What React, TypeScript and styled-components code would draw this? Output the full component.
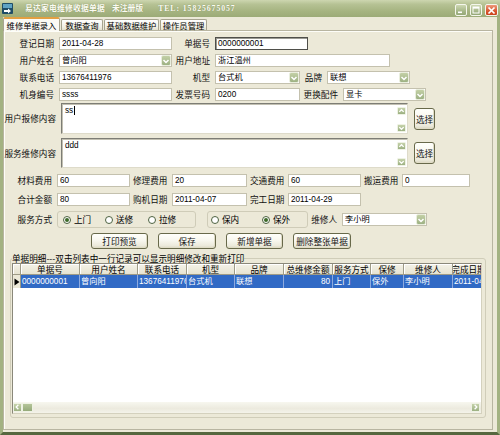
import React from "react";
import styled, { createGlobalStyle } from "styled-components";

const CJK = `"Noto Sans CJK SC", "Noto Sans", sans-serif`;
const UI = `"Liberation Sans", "Noto Sans CJK SC", sans-serif`;

const GlobalStyle = createGlobalStyle`
  html, body { margin: 0; padding: 0; background: #ece9d8; }
  body { font-family: ${UI}; font-size: 8.4px; color: #000; }
  * { box-sizing: border-box; }
`;

const Window = styled.div`
  width: 500px;
  height: 435px;
  display: flex;
  flex-direction: column;
  background: #ece9d8;
  overflow: hidden;
`;

const TitleBar = styled.div`
  height: 17px;
  flex: none;
  display: flex;
  align-items: center;
  padding: 0 2px;
  background: linear-gradient(#cdd6b0 0%, #b6c294 25%, #a6b481 65%, #9cab77 100%);
`;

const TitleText = styled.span<{ $ml: number; $ls?: number }>`
  margin-left: ${(p) => p.$ml}px;
  font-family: "Liberation Serif", "Noto Sans CJK SC", serif;
  font-weight: bold;
  font-size: 7.8px;
  line-height: 10px;
  letter-spacing: ${(p) => p.$ls ?? 0}px;
  color: #fbfbf2;
  text-shadow: 0 0 1px #7d8a5a;
  white-space: nowrap;
`;

const WinBtns = styled.div`
  margin-left: auto;
  display: flex;
  gap: 3px;
  padding-top: 3px;
`;

const WinBtn = styled.span<{ $close?: boolean }>`
  width: ${(p) => (p.$close ? 13 : 12)}px;
  height: 12px;
  border: 1px solid #f4f6ec;
  border-radius: 2px;
  background: ${(p) =>
    p.$close
      ? "linear-gradient(#ee9a7c, #d9552f 60%, #c9431f)"
      : "linear-gradient(#cdd8b2, #a6b788 60%, #95a877)"};
  display: flex;
  align-items: center;
  justify-content: center;
`;

const Body = styled.div`
  flex: 1;
  min-height: 0;
  display: flex;
  flex-direction: column;
  border-left: 3px solid #a3b282;
  border-right: 3px solid #a3b282;
  border-bottom: 3px solid #56673f;
`;

const TabStrip = styled.div`
  height: 13px;
  flex: none;
  display: flex;
  align-items: flex-end;
  gap: 1px;
  position: relative;
  z-index: 1;
`;

const Tab = styled.div<{ $w: number; $active?: boolean }>`
  width: ${(p) => p.$w}px;
  height: ${(p) => (p.$active ? 14 : 11)}px;
  margin-bottom: ${(p) => (p.$active ? -1 : 0)}px;
  border: 1px solid #a7a48f;
  border-bottom: none;
  border-top: ${(p) => (p.$active ? "2px solid #e3a042" : "1px solid #a7a48f")};
  border-radius: 2px 2px 0 0;
  background: ${(p) => (p.$active ? "#fbfaf4" : "linear-gradient(#ffffff, #f1efe4 70%, #e4e1cf)")};
  font-family: ${CJK};
  font-size: 8.3px;
  line-height: 10px;
  display: flex;
  align-items: center;
  justify-content: center;
  white-space: nowrap;
`;

const Panel = styled.div`
  flex: 1;
  min-height: 0;
  margin: 0 4px 2px 0;
  border: 1px solid #b8b5a1;
  box-shadow: inset 1px 1px 0 #fdfdf8;
  background: #ece9d8;
  display: flex;
  flex-direction: column;
`;

const Row = styled.div<{ $mt: number; $h?: number; $pl?: number; $gap?: number }>`
  display: flex;
  align-items: center;
  gap: ${(p) => p.$gap ?? 3}px;
  margin-top: ${(p) => p.$mt}px;
  height: ${(p) => p.$h ?? 13}px;
  padding-left: ${(p) => p.$pl ?? 0}px;
  flex: none;
`;

const Label = styled.span<{ $w: number }>`
  width: ${(p) => p.$w}px;
  flex: none;
  padding-right: 2px;
  text-align: right;
  white-space: nowrap;
  font-family: ${CJK};
  font-size: 8.6px;
  line-height: 13px;
  color: #111;
`;

const Input = styled.div<{ $w: number; $focus?: boolean }>`
  width: ${(p) => p.$w}px;
  height: 13px;
  flex: none;
  background: #fff;
  border: 1px solid ${(p) => (p.$focus ? "#4f4f4a" : "#c4c1ae")};
  box-shadow: ${(p) => (p.$focus ? "inset 1px 1px 0 #9a9a92" : "none")};
  display: flex;
  align-items: center;
  padding-left: 2px;
  font-size: 8.2px;
  line-height: 11px;
  white-space: nowrap;
  overflow: hidden;
`;

const InputText = styled.span`
  line-height: 11px;
  height: 11px;
  display: block;
`;

const DropBtn = styled.span`
  margin-left: auto;
  width: 10px;
  height: 11px;
  flex: none;
  border: 1px solid #e9eedd;
  border-radius: 2px;
  background: linear-gradient(#c3d0a6, #9db183);
  display: flex;
  align-items: center;
  justify-content: center;
`;

const Memo = styled.div<{ $w: number }>`
  width: ${(p) => p.$w}px;
  height: 100%;
  flex: none;
  display: flex;
  background: #fff;
  border-top: 1px solid #7d7d75;
  border-left: 1px solid #7d7d75;
  border-right: 1px solid #dedbca;
  border-bottom: 1px solid #dedbca;
  box-shadow: inset 1px 1px 0 #c2c0b2;
`;

const MemoText = styled.div`
  flex: 1;
  padding: 2px 3px;
  font-size: 8.2px;
  line-height: 10px;
  display: flex;
  align-items: flex-start;
`;

const Caret = styled.span`
  width: 1px;
  height: 9px;
  background: #000;
  margin-left: 1px;
`;

const VScroll = styled.div`
  width: 10px;
  flex: none;
  display: flex;
  flex-direction: column;
  justify-content: space-between;
  padding: 3px 1px 1px 0;
`;

const ScrollArrow = styled.span`
  width: 9px;
  height: 8px;
  border-radius: 1px;
  background: linear-gradient(#c5d2aa, #9cb082);
  border: 1px solid #eef2e4;
  display: flex;
  align-items: center;
  justify-content: center;
`;

const Btn = styled.button<{ $w: number; $h?: number }>`
  width: ${(p) => p.$w}px;
  height: ${(p) => p.$h ?? 16}px;
  flex: none;
  padding: 0;
  margin: 0;
  font-family: ${CJK};
  font-size: 8.6px;
  line-height: 10px;
  color: #111;
  border: 1px solid #68694a;
  border-radius: 3px;
  background: linear-gradient(#fffffb 0%, #f8f7ef 45%, #ebe9da 85%, #d8d5bf 100%);
  box-shadow: inset -1px -1px 0 #e0dcc6;
  white-space: nowrap;
`;

const SelectBtn = styled(Btn)`
  margin-left: 3px;
`;

const RadioGroup = styled.div<{ $w: number; $pl: number; $ml?: number }>`
  width: ${(p) => p.$w}px;
  height: 17px;
  flex: none;
  margin-left: ${(p) => p.$ml ?? 0}px;
  padding-left: ${(p) => p.$pl}px;
  border: 1px solid #cfccb8;
  border-radius: 3px;
  display: flex;
  align-items: center;
`;

const RadioItem = styled.span<{ $w: number }>`
  width: ${(p) => p.$w}px;
  flex: none;
  display: flex;
  align-items: center;
  gap: 3px;
  font-family: ${CJK};
  font-size: 8.6px;
  line-height: 11px;
  white-space: nowrap;
`;

const RadioDot = styled.span<{ $on?: boolean }>`
  width: 8px;
  height: 8px;
  flex: none;
  border-radius: 50%;
  border: 1px solid #4d6240;
  background: #fff;
  display: flex;
  align-items: center;
  justify-content: center;
  &::after {
    content: "";
    width: 4px;
    height: 4px;
    border-radius: 50%;
    background: ${(p) => (p.$on ? "#3d6a28" : "transparent")};
  }
`;

const Group = styled.fieldset`
  margin: 4px 0 0 6px;
  width: 476px;
  padding: 0 3px 3px 1px;
  border: 1px solid #d0cdb9;
  border-radius: 3px;
  min-width: 0;
`;

const Legend = styled.legend`
  padding: 0;
  margin: 0;
  font-family: ${CJK};
  font-size: 8.6px;
  line-height: 10px;
  white-space: nowrap;
`;

const GridBox = styled.div`
  height: 151px;
  display: flex;
  flex-direction: column;
  background: #fff;
  border-top: 1px solid #8a887a;
  border-left: 1px solid #8a887a;
  border-right: 1px solid #d4d1be;
  border-bottom: 1px solid #d4d1be;
  overflow: hidden;
`;

const GridTable = styled.div`
  display: grid;
  grid-template-columns: 8px 59px 58px 49px 48px 49px 49px 38px 33px 49px 32px;
  grid-template-rows: 11px 13px;
  width: 472px;
  flex: none;
`;

const HeadCell = styled.div`
  background: linear-gradient(#f4f2e8, #e6e3d1);
  border-right: 1px solid #9e9b87;
  border-bottom: 1px solid #9e9b87;
  box-shadow: inset 1px 1px 0 #fff;
  font-family: ${CJK};
  font-size: 8.6px;
  line-height: 10px;
  display: flex;
  align-items: center;
  justify-content: center;
  overflow: hidden;
  white-space: nowrap;
`;

const Cell = styled.div<{ $right?: boolean }>`
  background: #316ac5;
  color: #fff;
  border-right: 1px solid #8eaade;
  font-size: 8.2px;
  line-height: 11px;
  display: flex;
  align-items: center;
  justify-content: ${(p) => (p.$right ? "flex-end" : "flex-start")};
  padding: 0 2px 0 1px;
  overflow: hidden;
  white-space: nowrap;
`;

const IndicatorCell = styled.div`
  background: #ece9d8;
  border-right: 1px solid #9e9b87;
  display: flex;
  align-items: center;
  justify-content: center;
`;

const GridFill = styled.div`
  flex: 1;
`;

const HScroll = styled.div`
  height: 11px;
  flex: none;
  display: flex;
  align-items: center;
  padding: 0 1px 1px 0;
  background: linear-gradient(#f7f7ef, #eceade 60%, #f4f3ea);
`;

const HArrow = styled.span<{ $thumb?: boolean }>`
  width: ${(p) => (p.$thumb ? 11 : 9)}px;
  height: 9px;
  flex: none;
  border-radius: 1px;
  border: 1px solid #eef2e4;
  background: ${(p) => (p.$thumb ? "linear-gradient(#b5c59a, #95aa7a)" : "linear-gradient(#c5d2aa, #9cb082)")};
  display: flex;
  align-items: center;
  justify-content: center;
`;

const Track = styled.span`
  flex: 1;
`;

const Chevron = ({ dir }: { dir: "down" | "up" | "left" | "right" }) => {
  const d =
    dir === "down"
      ? "M1.5 3 L4 5.5 L6.5 3"
      : dir === "up"
      ? "M1.5 5 L4 2.5 L6.5 5"
      : dir === "left"
      ? "M5 1.5 L2.5 4 L5 6.5"
      : "M3 1.5 L5.5 4 L3 6.5";
  return (
    <svg width="8" height="8" viewBox="0 0 8 8">
      <path d={d} fill="none" stroke="#fff" strokeWidth="1.5" />
    </svg>
  );
};

const Field = ({ w, focus, children }: { w: number; focus?: boolean; children: React.ReactNode }) => (
  <Input $w={w} $focus={focus}>
    <InputText>{children}</InputText>
  </Input>
);

const Combo = ({ w, children }: { w: number; children: React.ReactNode }) => (
  <Input $w={w}>
    <InputText>{children}</InputText>
    <DropBtn>
      <Chevron dir="down" />
    </DropBtn>
  </Input>
);

const AppIcon = () => (
  <svg width="11" height="11" viewBox="0 0 11 11">
    <rect x="0" y="0" width="11" height="11" rx="1" fill="#1f4d67" />
    <rect x="1" y="1" width="9" height="4" fill="#5fa3c4" />
    <path d="M2 7 H6 V5.5 L9 8 L6 10.5 V9 H2 Z" fill="#ffffff" />
  </svg>
);

const header = ["", "单据号", "用户姓名", "联系电话", "机型", "品牌", "总维修金额", "服务方式", "保修", "维修人", "完成日期"];
const record = ["0000000001", "曾向阳", "13676411976", "台式机", "联想", "80", "上门", "保外", "李小明", "2011-04-29"];

export default function App() {
  return (
    <>
      <GlobalStyle />
      <Window>
        <TitleBar>
          <AppIcon />
          <TitleText $ml={12} $ls={0.2}>易达家电维修收据单据</TitleText>
          <TitleText $ml={7} $ls={0}>未注册版</TitleText>
          <TitleText $ml={15} $ls={0.9}>TEL: 15825675057</TitleText>
          <WinBtns>
            <WinBtn>
              <svg width="8" height="8" viewBox="0 0 8 8">
                <rect x="1" y="5.5" width="4" height="1.6" fill="#fff" />
              </svg>
            </WinBtn>
            <WinBtn>
              <svg width="8" height="8" viewBox="0 0 8 8">
                <rect x="1" y="1" width="6" height="6" fill="none" stroke="#fff" strokeWidth="1" />
                <rect x="1" y="1" width="6" height="1.6" fill="#fff" />
              </svg>
            </WinBtn>
            <WinBtn $close>
              <svg width="9" height="9" viewBox="0 0 9 9">
                <path d="M1.5 1.5 L7.5 7.5 M7.5 1.5 L1.5 7.5" stroke="#fff" strokeWidth="1.7" />
              </svg>
            </WinBtn>
          </WinBtns>
        </TitleBar>
        <Body>
          <TabStrip>
            <Tab $w={57} $active>维修单据录入</Tab>
            <Tab $w={42}>数据查询</Tab>
            <Tab $w={55}>基础数据维护</Tab>
            <Tab $w={47}>操作员管理</Tab>
          </TabStrip>
          <Panel>
            <Row $mt={6}>
              <Label $w={52}>登记日期</Label>
              <Field w={113}>2011-04-28</Field>
              <Label $w={37}>单据号</Label>
              <Field w={93} focus>0000000001</Field>
            </Row>
            <Row $mt={4}>
              <Label $w={52}>用户姓名</Label>
              <Combo w={113}>曾向阳</Combo>
              <Label $w={37}>用户地址</Label>
              <Field w={175}>浙江温州</Field>
            </Row>
            <Row $mt={4}>
              <Label $w={52}>联系电话</Label>
              <Field w={113}>13676411976</Field>
              <Label $w={37}>机型</Label>
              <Combo w={85}>台式机</Combo>
              <Label $w={21}>品牌</Label>
              <Combo w={83}>联想</Combo>
            </Row>
            <Row $mt={4}>
              <Label $w={52}>机身编号</Label>
              <Field w={113}>ssss</Field>
              <Label $w={37}>发票号码</Label>
              <Field w={85}>0200</Field>
              <Label $w={37}>更换配件</Label>
              <Combo w={83}>显卡</Combo>
            </Row>
            <Row $mt={2} $h={31}>
              <Label $w={54}>用户报修内容</Label>
              <Memo $w={347}>
                <MemoText>
                  ss<Caret />
                </MemoText>
                <VScroll>
                  <ScrollArrow>
                    <Chevron dir="up" />
                  </ScrollArrow>
                  <ScrollArrow>
                    <Chevron dir="down" />
                  </ScrollArrow>
                </VScroll>
              </Memo>
              <SelectBtn $w={21} $h={22}>选择</SelectBtn>
            </Row>
            <Row $mt={4} $h={30}>
              <Label $w={54}>服务维修内容</Label>
              <Memo $w={347}>
                <MemoText>ddd</MemoText>
                <VScroll>
                  <ScrollArrow>
                    <Chevron dir="up" />
                  </ScrollArrow>
                  <ScrollArrow>
                    <Chevron dir="down" />
                  </ScrollArrow>
                </VScroll>
              </Memo>
              <SelectBtn $w={21} $h={22}>选择</SelectBtn>
            </Row>
            <Row $mt={6}>
              <Label $w={50}>材料费用</Label>
              <Field w={73}>60</Field>
              <Label $w={36}>修理费用</Label>
              <Field w={75}>20</Field>
              <Label $w={35}>交通费用</Label>
              <Field w={73}>60</Field>
              <Label $w={35}>搬运费用</Label>
              <Field w={68}>0</Field>
            </Row>
            <Row $mt={6}>
              <Label $w={50}>合计金额</Label>
              <Field w={73}>80</Field>
              <Label $w={36}>购机日期</Label>
              <Field w={75}>2011-04-07</Field>
              <Label $w={35}>完工日期</Label>
              <Field w={73}>2011-04-29</Field>
            </Row>
            <Row $mt={5} $h={17}>
              <Label $w={50}>服务方式</Label>
              <RadioGroup $w={139} $pl={5}>
                <RadioItem $w={42}>
                  <RadioDot $on />
                  上门
                </RadioItem>
                <RadioItem $w={43}>
                  <RadioDot />
                  送修
                </RadioItem>
                <RadioItem $w={42}>
                  <RadioDot />
                  拉修
                </RadioItem>
              </RadioGroup>
              <RadioGroup $w={101} $pl={3} $ml={8}>
                <RadioItem $w={51}>
                  <RadioDot />
                  保内
                </RadioItem>
                <RadioItem $w={40}>
                  <RadioDot $on />
                  保外
                </RadioItem>
              </RadioGroup>
              <Label $w={28}>维修人</Label>
              <Combo w={85}>李小明</Combo>
            </Row>
            <Row $mt={5} $h={16} $pl={87} $gap={10}>
              <Btn $w={57}>打印预览</Btn>
              <Btn $w={58}>保存</Btn>
              <Btn $w={57}>新增单据</Btn>
              <Btn $w={58}>删除整张单据</Btn>
            </Row>
            <Group>
              <Legend>单据明细---双击列表中一行记录可以显示明细修改和重新打印</Legend>
              <GridBox>
                <GridTable>
                  {header.map((h, i) => (
                    <HeadCell key={"h" + i}>{h}</HeadCell>
                  ))}
                  <IndicatorCell>
                    <svg width="6" height="8" viewBox="0 0 6 8">
                      <path d="M0.5 0.5 L5.5 4 L0.5 7.5 Z" fill="#000" />
                    </svg>
                  </IndicatorCell>
                  {record.map((v, i) => (
                    <Cell key={"c" + i} $right={i === 5}>
                      {v}
                    </Cell>
                  ))}
                </GridTable>
                <GridFill />
                <HScroll>
                  <HArrow>
                    <Chevron dir="left" />
                  </HArrow>
                  <HArrow $thumb />
                  <Track />
                  <HArrow>
                    <Chevron dir="right" />
                  </HArrow>
                </HScroll>
              </GridBox>
            </Group>
          </Panel>
        </Body>
      </Window>
    </>
  );
}
